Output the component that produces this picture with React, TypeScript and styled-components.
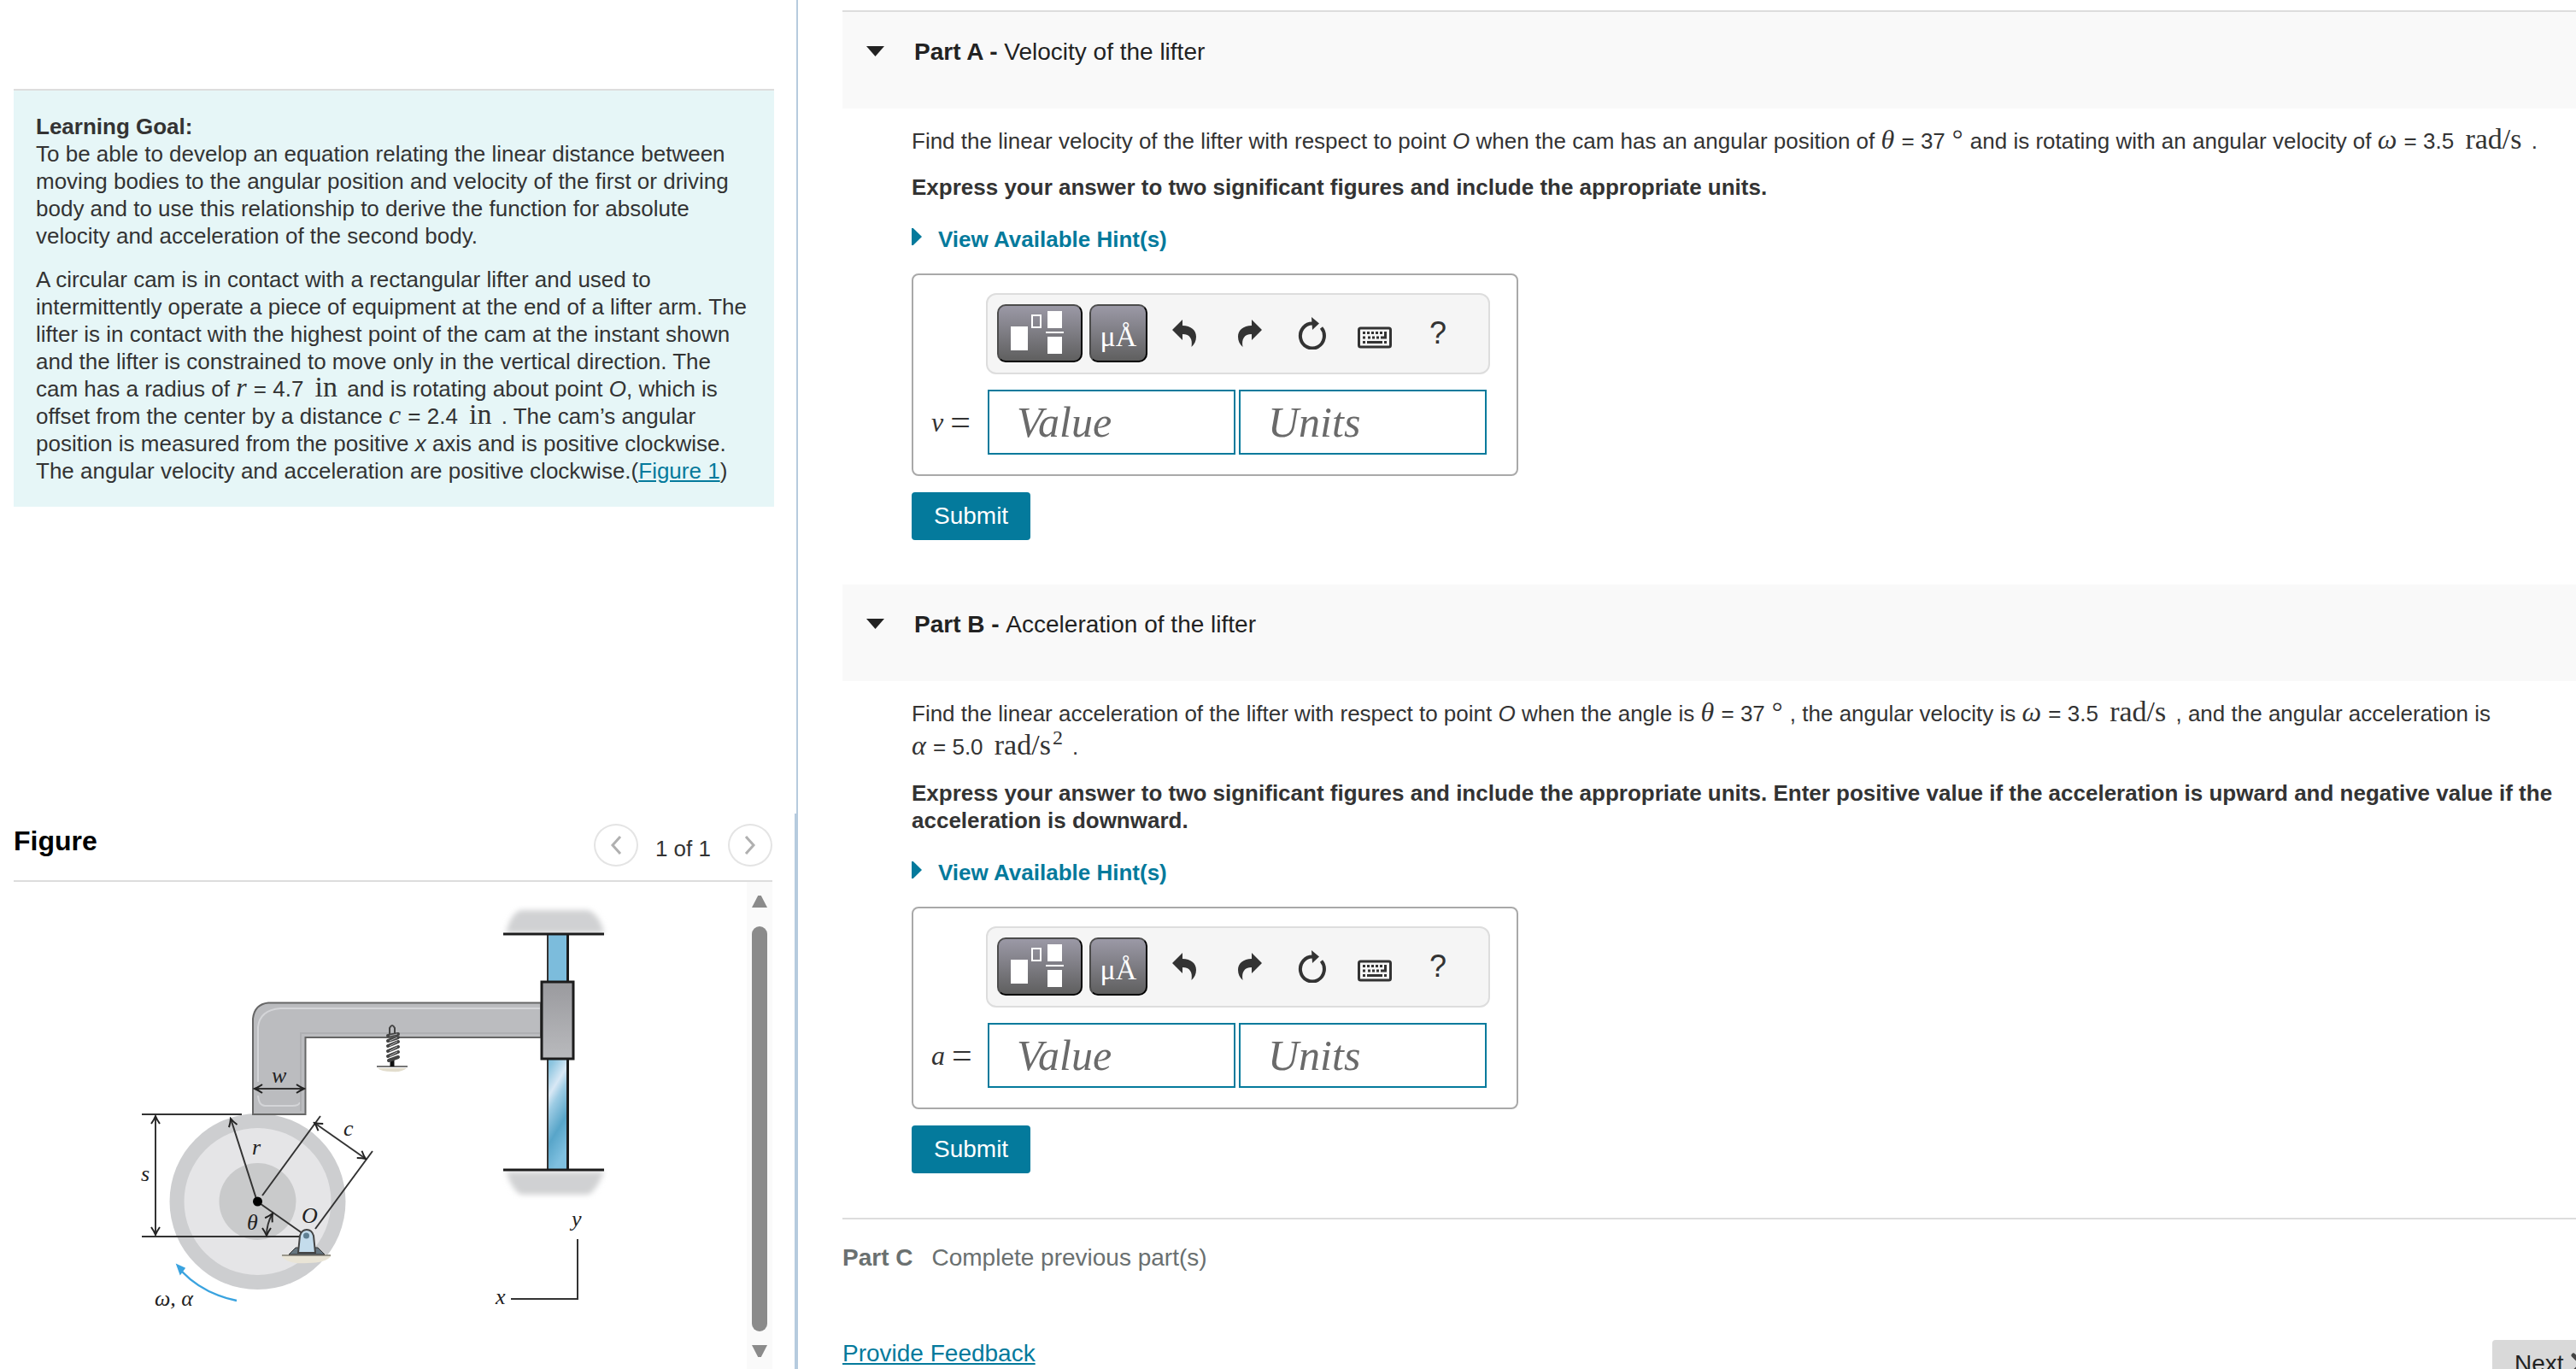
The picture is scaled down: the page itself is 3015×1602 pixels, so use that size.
import React from "react";
import styled, { createGlobalStyle } from "styled-components";

const sans = `"Liberation Sans", Arial, Helvetica, sans-serif`;
const serif = `"Liberation Serif", "Times New Roman", serif`;
const teal = "#047a9c";

const GlobalStyle = createGlobalStyle`
  * { box-sizing: border-box; }
  html, body { margin: 0; height: 100%; background: #fff; }
  body { font-family: ${sans}; font-size: 26px; line-height: 32px; color: #333; overflow: hidden; }
  button, input { font-family: inherit; }
  p { margin: 0; }
`;

const Page = styled.div`
  display: grid;
  grid-template-columns: 934px minmax(0, 1fr);
  height: 100vh;
  overflow: hidden;
`;

/* ---------- left column ---------- */

const Sidebar = styled.aside`
  display: flex;
  flex-direction: column;
  min-height: 0;
`;

const GoalArea = styled.div`
  flex: 1;
  padding: 104px 26px 0 16px;
  border-right: 2px solid #b6cbde;
`;

const GoalCard = styled.section`
  padding: 26px 26px 26px;
  background: #e6f6f7;
  border-top: 2px solid #ddd;
`;

const GoalText = styled.p`
  & + & { margin-top: 19px; }
`;

const Link = styled.a`
  color: ${teal};
  text-decoration: underline;
`;

const FigureArea = styled.section`
  display: flex;
  flex-direction: column;
  height: 650px;
  padding: 12px 26px 0 16px;
  border-right: 4px solid #b6cbde;
`;

const FigureHeader = styled.header`
  display: flex;
  align-items: center;
  justify-content: space-between;
  padding-bottom: 16px;
  border-bottom: 2px solid #ddd;
`;

const FigureTitle = styled.h2`
  margin: 0 0 10px;
  font-size: 32px;
  line-height: 40px;
  color: #000;
`;

const Pager = styled.nav`
  display: flex;
  align-items: center;
  gap: 20px;
`;

const PagerLabel = styled.span`
  padding-top: 8px;
`;

const PagerButton = styled.button`
  display: flex;
  align-items: center;
  justify-content: center;
  width: 52px;
  height: 50px;
  padding: 0;
  border: 2px solid #e4e4e4;
  border-radius: 50%;
  background: #fff;
`;

const FigureBody = styled.div`
  display: flex;
  justify-content: space-between;
  flex: 1;
  min-height: 0;
`;

const Drawing = styled.svg`
  display: block;
  width: 600px;
  height: 560px;
  margin-left: 124px;
`;

const Scrollbar = styled.div`
  display: flex;
  flex-direction: column;
  align-items: center;
  width: 30px;
  padding: 16px 0 14px;
  background: #fafafa;
`;

const ScrollArrow = styled.span<{ $down?: boolean }>`
  width: 18px;
  height: 14px;
  background: #8b8b8b;
  clip-path: ${(p) =>
    p.$down ? "polygon(0 0, 100% 0, 60% 100%, 40% 100%)" : "polygon(40% 0, 60% 0, 100% 100%, 0 100%)"};
`;

const ScrollThumb = styled.span`
  flex: 1;
  width: 18px;
  margin: 22px 0 16px;
  border-radius: 9px;
  background: #8b8b8b;
`;

/* ---------- right column ---------- */

const Main = styled.main`
  padding: 12px 0 0 52px;
  min-width: 0;
  overflow: hidden;
`;

const Parts = styled.div`
  border-top: 2px solid #ddd;
`;

const PartHeader = styled.header`
  display: flex;
  align-items: flex-start;
  gap: 35px;
  height: 113px;
  padding: 31px 28px 0;
  background: #f9f9f9;
  font-size: 28px;
  color: #222;
`;

const Caret = styled.button`
  width: 21px;
  height: 12px;
  margin-top: 9px;
  padding: 0;
  border: 0;
  background: #222;
  clip-path: polygon(0 0, 100% 0, 50% 100%);
`;

const PartTitle = styled.h2`
  margin: 0;
  font-size: 28px;
  font-weight: 400;
`;

const PartBody = styled.div`
  padding: 19px 20px 52px 81px;
`;

const Question = styled.p`
  line-height: 39px;
`;

const Instruction = styled.p`
  margin-top: 18px;
  font-weight: 700;
`;

const Hints = styled.button`
  display: flex;
  align-items: flex-start;
  gap: 19px;
  margin-top: 29px;
  padding: 0;
  border: 0;
  background: none;
  color: ${teal};
  font-size: 26px;
  font-weight: 700;
  line-height: 32px;
`;

const HintArrow = styled.span`
  width: 12px;
  height: 20px;
  margin-top: 3px;
  background: ${teal};
  clip-path: polygon(0 0, 15% 0, 100% 50%, 15% 100%, 0 100%);
`;

const AnswerBox = styled.div`
  display: grid;
  grid-template-columns: 66px auto;
  justify-content: start;
  row-gap: 18px;
  width: 710px;
  margin-top: 24px;
  padding: 21px 19px 23px;
  border: 2px solid #a9a9a9;
  border-radius: 8px;
`;

const Toolbar = styled.div`
  display: flex;
  align-items: center;
  grid-column: 2;
  width: 590px;
  height: 95px;
  padding: 0 11px 2px;
  border: 2px solid #ddd;
  border-radius: 12px;
  background: #f5f5f5;
`;

const PadButton = styled.button<{ $width: number }>`
  display: flex;
  align-items: center;
  justify-content: center;
  width: ${(p) => p.$width}px;
  height: 68px;
  margin-right: 8px;
  padding: 0;
  border: 2px solid #000;
  border-top-color: #4c4c4c;
  border-left-color: #4c4c4c;
  border-radius: 10px;
  background: linear-gradient(#9b99a6, #5f5f5f);
  color: #fff;
  font-family: ${serif};
  font-size: 34px;
`;

const UnitsGlyphs = styled.span`
  padding-top: 8px;
`;

const IconButton = styled.button<{ $width: number }>`
  display: flex;
  align-items: center;
  justify-content: center;
  width: ${(p) => p.$width}px;
  height: 68px;
  padding: 0;
  border: 0;
  background: none;
  color: #333;
  font-size: 36px;
`;

const Variable = styled.label`
  display: flex;
  align-items: center;
  gap: 8px;
  align-self: center;
  padding-left: 2px;
  font-family: ${serif};
  font-size: 32px;
  line-height: 32px;
`;

const Equals = styled.span`
  font-size: 42px;
`;

const Fields = styled.div`
  display: flex;
  gap: 4px;
  padding-left: 2px;
`;

const Field = styled.input`
  width: 290px;
  height: 76px;
  padding: 0 32px;
  border: 2px solid ${teal};
  border-radius: 0;
  background: #fff;
  color: #333;
  font-family: ${serif};
  font-size: 50px;
  &::placeholder { color: #6a6a6a; font-style: italic; opacity: 1; }
`;

const Submit = styled.button`
  display: block;
  height: 56px;
  margin-top: 19px;
  padding: 0 26px;
  border: 0;
  border-radius: 4px;
  background: ${teal};
  color: #fff;
  font-size: 28px;
`;

const Locked = styled.section`
  display: flex;
  gap: 22px;
  padding: 29px 0 0;
  border-top: 2px solid #ddd;
  color: #6a7070;
  font-size: 28px;
`;

const Footer = styled.footer`
  display: flex;
  justify-content: space-between;
  align-items: flex-start;
  margin: 80px -50px 0 0;
  font-size: 28px;
`;

const Next = styled.button`
  display: flex;
  align-items: center;
  gap: 8px;
  height: 56px;
  width: 148px;
  padding: 0 26px;
  border: 0;
  border-radius: 4px;
  background: #d9d9d9;
  color: #222;
  font-size: 28px;
`;

/* ---------- math ---------- */

const MathRun = styled.span`
  white-space: nowrap;
`;

const Sym = styled.i`
  padding-right: 1px;
  font-family: ${serif};
  font-size: 32px;
  line-height: 28px;
`;

const Unit = styled.span`
  margin: 0 4px 0 6px;
  font-family: ${serif};
  font-size: 34px;
  line-height: 28px;
`;

const Power = styled.sup`
  margin-left: 2px;
  font-size: 24px;
  line-height: 1px;
`;

const Degree = styled.span`
  margin: 0 1px 0 8px;
  font-family: ${serif};
  font-size: 32px;
  line-height: 28px;
`;

const Quantity = ({ sym, value, unit, power, degree }: {
  sym: string; value: string; unit?: string; power?: string; degree?: boolean;
}) => (
  <MathRun>
    <Sym>{sym}</Sym>
    {` = ${value}${unit ? " " : ""}`}
    {degree && <Degree>°</Degree>}
    {unit && <Unit>{unit}{power && <Power>{power}</Power>}</Unit>}
  </MathRun>
);

/* ---------- icons ---------- */

const TemplateIcon = () => (
  <svg width="96" height="64" viewBox="0 0 96 64" aria-hidden="true">
    <g fill="#fff">
      <rect x="14" y="24" width="20" height="28" />
      <rect x="57" y="6" width="17" height="20" />
      <rect x="55" y="30" width="21" height="2" />
      <rect x="57" y="36" width="17" height="20" />
    </g>
    <rect x="39" y="11" width="10" height="14" fill="none" stroke="#fff" strokeWidth="2" />
  </svg>
);

const CurvedArrow = ({ flip }: { flip?: boolean }) => (
  <svg width="28" height="32" viewBox="0 0 28 32" aria-hidden="true">
    <path
      transform={flip ? "translate(28 0) scale(-1 1)" : undefined}
      d="M0 12 L12 0 V7 C22 7.500 28 12 28 20 C28 25 26 29 22.500 32 C24 23 21 17 12 17 V24 Z"
      fill="#333"
    />
  </svg>
);

const ResetIcon = () => (
  <svg width="34" height="38" viewBox="0 0 34 38" aria-hidden="true">
    <path d="M27.500 12.500 A14 14.500 0 1 1 17 7.500" fill="none" stroke="#333" strokeWidth="4" />
    <path d="M16 0 L25 7.500 L17 15 Z" fill="#333" />
  </svg>
);

const KeyboardIcon = () => (
  <svg width="40" height="36" viewBox="0 -10 40 36" aria-hidden="true">
    <rect x="1.500" y="2" width="37" height="22" rx="2" fill="none" stroke="#333" strokeWidth="3" />
    <g fill="#333">
      {[6, 11, 16, 21, 26].map((x) => <rect key={x} x={x} y="6" width="3" height="3" />)}
      {[6, 12, 17, 22].map((x) => <rect key={x} x={x} y="11.500" width="3" height="3" />)}
      <path d="M31 6 H34 V14.500 H27 V11.500 H31 Z" />
      <rect x="6" y="17" width="3" height="3" />
      <rect x="11" y="17" width="18" height="3" />
      <rect x="31" y="17" width="3" height="3" />
    </g>
  </svg>
);

const Chevron = ({ right }: { right?: boolean }) => (
  <svg width="16" height="24" viewBox="0 0 16 24" aria-hidden="true">
    <path d={right ? "M3 2 L12 12 L3 22" : "M13 2 L4 12 L13 22"} fill="none" stroke="#b0b0b0" strokeWidth="3" />
  </svg>
);

const NextChevron = () => (
  <svg width="18" height="26" viewBox="0 0 18 26" aria-hidden="true">
    <path d="M3 3 L13 13 L3 23" fill="none" stroke="#444" strokeWidth="5" strokeLinecap="round" />
  </svg>
);

/* ---------- cam drawing ---------- */

const CamDrawing = () => (
  <Drawing viewBox="140 1032 600 560" role="img" aria-label="Circular cam driving a lifter arm">
    <defs>
      <linearGradient id="rod" x1="0" y1="0" x2="0.300" y2="1">
        <stop offset="0" stopColor="#7cbcdc" />
        <stop offset="0.100" stopColor="#8fc6e0" />
        <stop offset="0.320" stopColor="#d8e8f5" />
        <stop offset="0.450" stopColor="#9dcce4" />
        <stop offset="0.720" stopColor="#58a5c9" />
        <stop offset="1" stopColor="#7fc0e0" />
      </linearGradient>
      <linearGradient id="collar" x1="0" y1="0" x2="0" y2="1">
        <stop offset="0" stopColor="#9a9a9e" />
        <stop offset="1" stopColor="#b9babd" />
      </linearGradient>
      <filter id="soft" x="-10%" y="-20%" width="120%" height="140%">
        <feGaussianBlur stdDeviation="3" />
      </filter>
      <marker id="tip" viewBox="-10 -6 12 12" markerWidth="12" markerHeight="12" markerUnits="userSpaceOnUse" orient="auto-start-reverse">
        <path d="M-9 -5 Q-4 -1.500 0 0 Q-4 1.500 -9 5" fill="none" stroke="#222" strokeWidth="2" />
      </marker>
    </defs>

    <path d="M592 1092 Q598 1068 610 1065 H688 Q702 1070 707 1092 Z" fill="#d0d1d3" filter="url(#soft)" />
    <path d="M592 1371 Q600 1394 610 1398 H688 Q698 1394 707 1371 Z" fill="#d0d1d3" filter="url(#soft)" />
    <rect x="582" y="1094" width="132" height="12" fill="#fff" />
    <rect x="582" y="1356" width="132" height="12" fill="#fff" />

    <rect x="641" y="1093" width="24" height="57" fill="#7cbcdc" />
    <rect x="641" y="1239" width="24" height="130" fill="url(#rod)" />
    <path d="M641 1093 V1369" stroke="#333" strokeWidth="2" />
    <path d="M664.500 1093 V1369" stroke="#1c1c1c" strokeWidth="3" />
    <path d="M589 1093 H707 M589 1369 H707" stroke="#1c1c1c" strokeWidth="3" />

    <circle cx="301.500" cy="1406" r="103" fill="#cdced0" />
    <circle cx="301.500" cy="1406" r="86" fill="#e5e5e7" />
    <circle cx="301.500" cy="1406" r="45" fill="#c9cacb" />

    <path d="M296 1304 V1192 Q298 1175 314 1173.500 H633 V1214 H357.500 V1304 Z" fill="#bbbcbf" stroke="#666" strokeWidth="2" />
    <path d="M302 1266 V1202 Q304 1182 328 1180 H632" fill="none" stroke="#d4d5d8" strokeWidth="2" />
    <path d="M302 1282 Q303 1294 310 1294 H342 Q350 1294 351 1290" fill="none" stroke="#d4d5d8" strokeWidth="2" />
    <path d="M352 1300 V1209 H632" fill="none" stroke="#aeafb2" strokeWidth="2" />
    <rect x="634" y="1149" width="37" height="90" fill="url(#collar)" stroke="#1c1c1c" strokeWidth="3" />

    <path d="M442 1250 H476 Q470 1255 459 1254 Q446 1254 442 1250 Z" fill="#e2ddcd" />
    <path d="M441 1248 H477" stroke="#777" strokeWidth="2" />
    <path d="M459 1248 V1238" stroke="#111" strokeWidth="5" />
    <path d="M456 1212 V1203 Q459 1197 462 1203 V1212" fill="none" stroke="#444" strokeWidth="2" />
    <path
      d="M454 1212 L466 1210 M454 1218 L466 1214 M454 1224 L466 1219 M454 1230 L466 1225 M454 1236 L466 1231 M455 1241 L466 1237"
      stroke="#444" strokeWidth="4" strokeLinecap="round"
    />
    <path
      d="M456 1212 L465 1210 M456 1218 L465 1214 M456 1224 L465 1219 M456 1230 L465 1225 M456 1236 L465 1231"
      stroke="#b4b4b6" strokeWidth="1"
    />

    <g stroke="#333" strokeWidth="2" fill="none">
      <path d="M166 1304 H283 M166 1447 H357" />
      <path d="M182 1306 V1445" markerStart="url(#tip)" markerEnd="url(#tip)" />
      <path d="M298 1274 H356" markerStart="url(#tip)" markerEnd="url(#tip)" />
      <path d="M301 1406 L270 1309" markerEnd="url(#tip)" />
      <path d="M307 1399 L375 1306 M369 1438 L436 1347" />
      <path d="M368 1314 L428 1356" markerStart="url(#tip)" markerEnd="url(#tip)" />
      <path d="M301 1406 L358 1446" />
      <path d="M312 1446 Q312 1432 319 1420" markerStart="url(#tip)" markerEnd="url(#tip)" />
      <path d="M676 1450 V1520 H598" />
    </g>
    <circle cx="301.500" cy="1406" r="5.500" fill="#000" />

    <path d="M329 1469 H388 Q382 1478 360 1478 Q336 1480 329 1469 Z" fill="#e9e4d6" />
    <path d="M330 1469 H387" stroke="#9a978c" strokeWidth="2" />
    <path d="M338 1468 L346 1460 H372 L380 1468 Z" fill="#66757f" stroke="#333" strokeWidth="1" />
    <path d="M349 1466 L351 1446 Q353 1439 359 1439 Q365 1439 367 1446 L369 1466 Z" fill="#c4dcec" stroke="#444" strokeWidth="2" />
    <circle cx="358.500" cy="1446" r="3.500" fill="#5f7f92" />

    <path d="M277 1522 Q238 1514 213 1488" fill="none" stroke="#3aa3df" strokeWidth="2.500" />
    <path d="M207 1480 L216 1484 L211 1491 Z" fill="#3aa3df" stroke="#3aa3df" strokeWidth="1.500" />

    <g fontFamily={serif} fontStyle="italic" fontSize="26" fill="#222">
      <text x="318" y="1267">w</text>
      <text x="295" y="1351">r</text>
      <text x="402" y="1329">c</text>
      <text x="165" y="1382">s</text>
      <text x="289" y="1439">θ</text>
      <text x="353" y="1431">O</text>
      <text x="181" y="1528">ω, α</text>
      <text x="669" y="1435">y</text>
      <text x="580" y="1526">x</text>
    </g>
  </Drawing>
);

const Answer = ({ id, name }: { id: string; name: string }) => (
  <>
    <AnswerBox>
      <Toolbar>
        <PadButton $width={100} aria-label="Templates"><TemplateIcon /></PadButton>
        <PadButton $width={68}><UnitsGlyphs>μÅ</UnitsGlyphs></PadButton>
        <IconButton $width={70} aria-label="Undo"><CurvedArrow /></IconButton>
        <IconButton $width={84} aria-label="Redo"><CurvedArrow flip /></IconButton>
        <IconButton $width={62} aria-label="Reset"><ResetIcon /></IconButton>
        <IconButton $width={84} aria-label="Keyboard"><KeyboardIcon /></IconButton>
        <IconButton $width={64} aria-label="Help">?</IconButton>
      </Toolbar>
      <Variable htmlFor={id}><i>{name}</i><Equals>=</Equals></Variable>
      <Fields>
        <Field id={id} placeholder="Value" />
        <Field aria-label="Units" placeholder="Units" />
      </Fields>
    </AnswerBox>
    <Submit>Submit</Submit>
  </>
);

const HintToggle = () => (
  <Hints><HintArrow />View Available Hint(s)</Hints>
);

export default function App() {
  return (
    <>
      <GlobalStyle />
      <Page>
        <Sidebar>
          <GoalArea>
            <GoalCard>
              <GoalText>
                <b>Learning Goal:</b><br />
                To be able to develop an equation relating the linear distance between moving bodies to the
                angular position and velocity of the first or driving body and to use this relationship to
                derive the function for absolute velocity and acceleration of the second body.
              </GoalText>
              <GoalText>
                A circular cam is in contact with a rectangular lifter and used to intermittently operate a
                piece of equipment at the end of a lifter arm. The lifter is in contact with the highest point
                of the cam at the instant shown and the lifter is constrained to move only in the vertical
                direction. The cam has a radius of <Quantity sym="r" value="4.7" unit="in" /> and is rotating
                about point <i>O</i>, which is offset from the center by a distance{" "}
                <Quantity sym="c" value="2.4" unit="in" /> . The cam’s angular position is measured from the
                positive <i>x</i> axis and is positive clockwise. The angular velocity and acceleration are
                positive clockwise.(<Link href="#figure">Figure 1</Link>)
              </GoalText>
            </GoalCard>
          </GoalArea>
          <FigureArea id="figure">
            <FigureHeader>
              <FigureTitle>Figure</FigureTitle>
              <Pager>
                <PagerButton aria-label="Previous figure"><Chevron /></PagerButton>
                <PagerLabel>1 of 1</PagerLabel>
                <PagerButton aria-label="Next figure"><Chevron right /></PagerButton>
              </Pager>
            </FigureHeader>
            <FigureBody>
              <CamDrawing />
              <Scrollbar>
                <ScrollArrow />
                <ScrollThumb />
                <ScrollArrow $down />
              </Scrollbar>
            </FigureBody>
          </FigureArea>
        </Sidebar>

        <Main>
          <Parts>
            <section>
              <PartHeader>
                <Caret aria-label="Collapse Part A" />
                <PartTitle><b>Part A - </b>Velocity of the lifter</PartTitle>
              </PartHeader>
              <PartBody>
                <Question>
                  Find the linear velocity of the lifter with respect to point <i>O</i> when the cam has an
                  angular position of <Quantity sym="θ" value="37" degree /> and is rotating with an angular
                  velocity of <Quantity sym="ω" value="3.5" unit="rad/s" /> .
                </Question>
                <Instruction>
                  Express your answer to two significant figures and include the appropriate units.
                </Instruction>
                <HintToggle />
                <Answer id="velocity" name="v" />
              </PartBody>
            </section>
            <section>
              <PartHeader>
                <Caret aria-label="Collapse Part B" />
                <PartTitle><b>Part B - </b>Acceleration of the lifter</PartTitle>
              </PartHeader>
              <PartBody>
                <Question>
                  Find the linear acceleration of the lifter with respect to point <i>O</i> when the angle
                  is <Quantity sym="θ" value="37" degree /> , the angular velocity is{" "}
                  <Quantity sym="ω" value="3.5" unit="rad/s" /> , and the angular acceleration is{" "}
                  <Quantity sym="α" value="5.0" unit="rad/s" power="2" /> .
                </Question>
                <Instruction>
                  Express your answer to two significant figures and include the appropriate units. Enter
                  positive value if the acceleration is upward and negative value if the acceleration is
                  downward.
                </Instruction>
                <HintToggle />
                <Answer id="acceleration" name="a" />
              </PartBody>
            </section>
          </Parts>
          <Locked><b>Part C</b><span>Complete previous part(s)</span></Locked>
          <Footer>
            <Link href="#feedback">Provide Feedback</Link>
            <Next>Next <NextChevron /></Next>
          </Footer>
        </Main>
      </Page>
    </>
  );
}
